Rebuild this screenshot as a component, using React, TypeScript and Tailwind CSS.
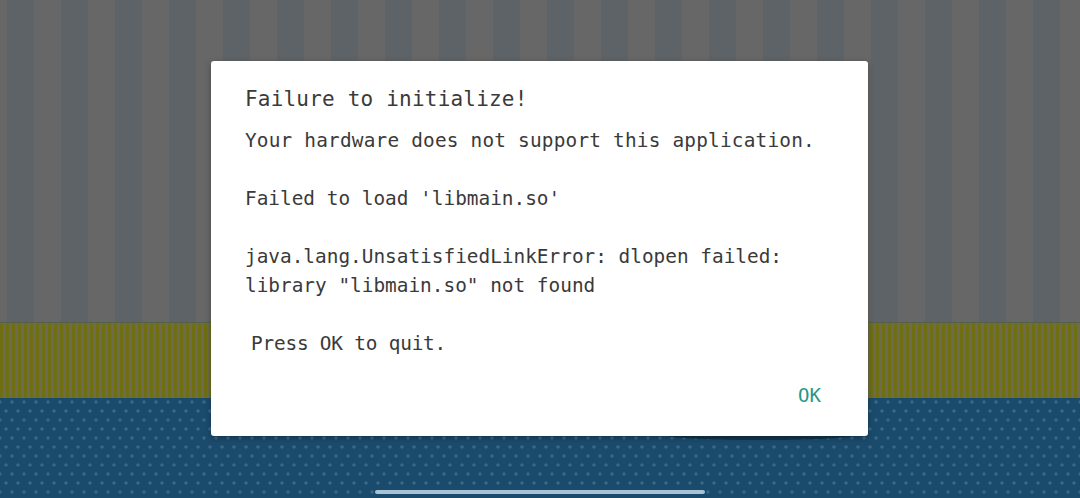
import React from "react";

const lines = [
  "Your hardware does not support this application.",
  "",
  "Failed to load 'libmain.so'",
  "",
  'java.lang.UnsatisfiedLinkError: dlopen failed:',
  'library "libmain.so" not found',
  "",
];

const App: React.FC = () => {
  return (
    <div className="relative w-full h-[498px] overflow-hidden flex flex-col">
      {/* game background */}
      <div className="h-[322px] bg-[repeating-linear-gradient(90deg,#676767_0_27px,#5e6368_27px_54px)] bg-[position:-20px_0]" />
      <div className="h-[76px] bg-[repeating-linear-gradient(90deg,#6f6f12_0_3px,#6c6c4e_3px_6px)] border-t border-[#55604a]" />
      <div className="flex-1 bg-[#1b4b6c] bg-[radial-gradient(circle,#3a6785_1.3px,transparent_2px),radial-gradient(circle,#3a6785_1.3px,transparent_2px)] bg-[length:12px_18px] bg-[position:0_4px,6px_13px]" />

      <div className="absolute left-[660px] top-[428px] w-[200px] h-[12px] rounded-[50%] bg-[#0f3550]" />

      {/* dialog */}
      <div className="absolute left-[211px] top-[61px] w-[657px] h-[375px] bg-white rounded-[3px] shadow-[0_2px_6px_rgba(0,0,0,0.3)] pt-[24px] pl-[34px] pr-[34px] font-['DejaVu_Sans_Mono',monospace] text-[#3a3a3a] flex flex-col">
        <h1 className="text-[21px] leading-[28px] tracking-[0.2px]">Failure to initialize!</h1>
        <div className="mt-[13px] text-[19.4px] leading-[29px] whitespace-pre">
          {lines.map((l, i) => (
            <div key={i} className={`h-[29px] ${i === 0 ? "tracking-[0.2px]" : ""}`}>
              {l}
            </div>
          ))}
          <div className="h-[29px] pl-[6px] tracking-[-0.2px]">Press OK to quit.</div>
        </div>
        <div className="flex justify-end mt-[23px] pr-[13px]">
          <button className="text-[19px] leading-[28px] text-[#2a9688]">OK</button>
        </div>
      </div>

      {/* home indicator */}
      <div className="absolute left-[375px] top-[490px] w-[330px] h-[4px] rounded-full bg-[#a9c3d6]" />
    </div>
  );
};

export default App;
